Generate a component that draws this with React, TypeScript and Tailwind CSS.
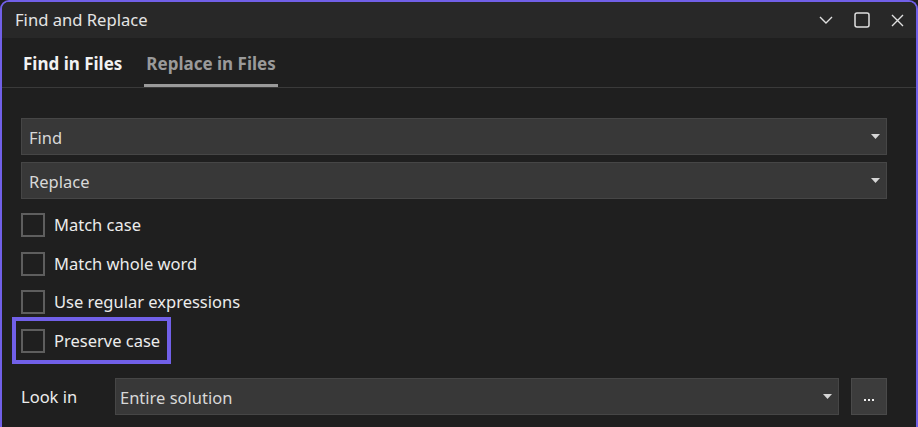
import { FC, ReactNode } from 'react';

const font = { fontFamily: '"Noto Sans", "Open Sans", sans-serif' };

const Caret = () => (
  <svg width="9" height="5" viewBox="0 0 9 5" className="shrink-0">
    <path d="M0 0h9L4.5 5z" fill="#d6d6d6" />
  </svg>
);

const ComboBox: FC<{ text: string; className?: string }> = ({ text, className }) => (
  <div
    className={`flex h-[37px] items-center justify-between border border-[#464646] bg-[#383838] pr-[6px] text-[16.5px] text-[#d8d8d8] ${className ?? 'pl-[7px]'}`}
  >
    <span className="pt-[3px]">{text}</span>
    <Caret />
  </div>
);

const CheckRow: FC<{ label: string; children?: ReactNode }> = ({ label, children }) => (
  <div className="relative flex h-[38.5px] items-center gap-[9px]">
    {children}
    <span className="h-[24px] w-[24px] shrink-0 border-2 border-[#5e5e5e]" />
    <span className="pt-[1px] text-[16.5px] text-[#ececec]">{label}</span>
  </div>
);

export default function App() {
  return (
    <div style={font} className="h-[427px] w-[918px] overflow-hidden bg-[#1f1f1f]">
      <div className="flex h-full flex-col rounded-t-[9px] border-2 border-b-0 border-[#7160e8] bg-[#1f1f1f]">
        {/* title bar */}
        <div className="flex h-[36px] shrink-0 items-center justify-between rounded-t-[7px] bg-[#282828] pl-[13px] pr-[12px]">
          <span className="pt-[1px] text-[16.6px] text-[#e4e4e4]">Find and Replace</span>
          <div className="flex items-center gap-[21px]">
            <svg width="14" height="8" viewBox="0 0 14 8">
              <path d="M1 1l6 6 6-6" fill="none" stroke="#e0e0e0" strokeWidth="1.4" />
            </svg>
            <svg width="16" height="16" viewBox="0 0 16 16">
              <rect x="1" y="1" width="14" height="14" rx="2" fill="none" stroke="#e0e0e0" strokeWidth="1.5" />
            </svg>
            <svg width="13" height="13" viewBox="0 0 13 13">
              <path d="M1 1l11 11M12 1L1 12" fill="none" stroke="#e0e0e0" strokeWidth="1.4" />
            </svg>
          </div>
        </div>

        {/* tabs */}
        <div className="flex h-[50px] shrink-0 items-end gap-[22px] border-b border-[#3a3a3a] pl-[21px]">
          <div className="flex h-full items-center pt-[3px] text-[17px] font-bold text-[#f2f2f2]">
            Find in Files
          </div>
          <div className="flex h-full items-center border-b-[3px] border-[#9a9a9a] px-[2px] pt-[6px] text-[17px] font-bold text-[#9a9a9a]">
            Replace in Files
          </div>
        </div>

        {/* form */}
        <div className="flex flex-col pl-[19px] pr-[29px] pt-[30px]">
          <ComboBox text="Find" />
          <ComboBox text="Replace" className="mt-[7px] pl-[7px]" />

          <div className="mt-[7px] flex flex-col">
            <CheckRow label="Match case" />
            <CheckRow label="Match whole word" />
            <CheckRow label="Use regular expressions" />
            <div className="w-fit">
              <CheckRow label="Preserve case">
                <span className="pointer-events-none absolute -bottom-[4px] -left-[9px] -right-[11px] -top-[4.5px] border-[4px] border-[#7160e8]" />
              </CheckRow>
            </div>
          </div>

          <div className="mt-[18px] flex items-center">
            <span className="w-[94px] shrink-0 pt-[2px] text-[16.5px] text-[#ececec]">Look in</span>
            <ComboBox text="Entire solution" className="flex-1 pl-[4px]" />
            <button className="ml-[12px] flex h-[37px] w-[36px] shrink-0 items-center justify-center border border-[#4a4a4a] bg-[#3c3c3c] pt-[6px]">
              <span className="flex gap-[1.6px]">
                <span className="h-[2px] w-[2px] bg-[#f0f0f0]" />
                <span className="h-[2px] w-[2px] bg-[#f0f0f0]" />
                <span className="h-[2px] w-[2px] bg-[#f0f0f0]" />
              </span>
            </button>
          </div>
        </div>
      </div>
    </div>
  );
}
